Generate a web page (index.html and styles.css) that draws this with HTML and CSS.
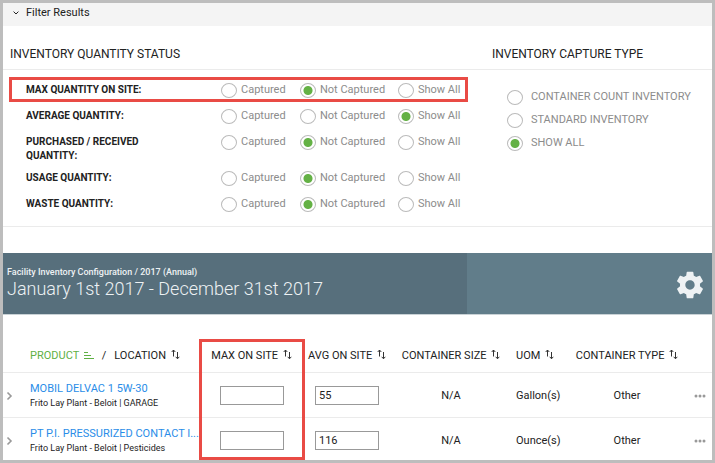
FILE: index.html
```html
<!DOCTYPE html>
<html lang="en">
<head>
<meta charset="utf-8">
<meta name="viewport" content="width=device-width, initial-scale=1">
<title>Facility Inventory Configuration</title>
<link rel="stylesheet" href="styles.css">
</head>
<body>
<svg class="sprite" aria-hidden="true">
  <symbol id="sort" viewBox="0 0 9 11">
    <path d="M2.500 7.500V1M.7 3 2.500 1l1.800 2M6.500 3v6.500M4.700 7.800 6.500 9.800l1.800-2" fill="none" stroke="currentColor"/>
  </symbol>
  <symbol id="chevron" viewBox="0 0 8 10">
    <path d="M1.500 1.500 5 5 1.500 8.500" fill="none" stroke="currentColor" stroke-width="1.600"/>
  </symbol>
  <symbol id="dots" viewBox="0 0 12 4">
    <circle cx="2" cy="2" r="1.500"/><circle cx="6" cy="2" r="1.500"/><circle cx="10" cy="2" r="1.500"/>
  </symbol>
</svg>
<main class="frame">
  <button type="button" class="filter-toggle">
    <svg width="6" height="4" viewBox="0 0 6 4" aria-hidden="true"><path d="M.6.6 3 3 5.400.6" fill="none" stroke="currentColor"/></svg>
    Filter Results
  </button>
  <form class="filters">
    <section class="quantity">
      <h2>INVENTORY QUANTITY STATUS</h2>
      <div class="rows">
        <div class="row marked" role="radiogroup" aria-labelledby="q1">
          <span class="name" id="q1">MAX QUANTITY ON SITE:</span>
          <label><input type="radio" name="max">Captured</label>
          <label><input type="radio" name="max" checked>Not Captured</label>
          <label><input type="radio" name="max">Show All</label>
        </div>
        <div class="row" role="radiogroup" aria-labelledby="q2">
          <span class="name" id="q2">AVERAGE QUANTITY:</span>
          <label><input type="radio" name="avg">Captured</label>
          <label><input type="radio" name="avg">Not Captured</label>
          <label><input type="radio" name="avg" checked>Show All</label>
        </div>
        <div class="row" role="radiogroup" aria-labelledby="q3">
          <span class="name" id="q3">PURCHASED / RECEIVED QUANTITY:</span>
          <label><input type="radio" name="purchased">Captured</label>
          <label><input type="radio" name="purchased" checked>Not Captured</label>
          <label><input type="radio" name="purchased">Show All</label>
        </div>
        <div class="row" role="radiogroup" aria-labelledby="q4">
          <span class="name" id="q4">USAGE QUANTITY:</span>
          <label><input type="radio" name="usage">Captured</label>
          <label><input type="radio" name="usage" checked>Not Captured</label>
          <label><input type="radio" name="usage">Show All</label>
        </div>
        <div class="row" role="radiogroup" aria-labelledby="q5">
          <span class="name" id="q5">WASTE QUANTITY:</span>
          <label><input type="radio" name="waste">Captured</label>
          <label><input type="radio" name="waste" checked>Not Captured</label>
          <label><input type="radio" name="waste">Show All</label>
        </div>
      </div>
    </section>
    <section class="capture">
      <h2>INVENTORY CAPTURE TYPE</h2>
      <div class="options">
        <label><input type="radio" name="type">CONTAINER COUNT INVENTORY</label>
        <label><input type="radio" name="type">STANDARD INVENTORY</label>
        <label><input type="radio" name="type" checked>SHOW ALL</label>
      </div>
    </section>
  </form>
  <header class="banner">
    <div class="period">
      <p>Facility Inventory Configuration / 2017 (Annual)</p>
      <h1>January 1st 2017 - December 31st 2017</h1>
    </div>
    <button type="button" class="settings" aria-label="Settings">
      <svg width="32" height="32" viewBox="0 0 24 24" aria-hidden="true"><path fill="currentColor" d="M19.430 12.980c.04-.32.07-.64.07-.98s-.03-.66-.07-.98l2.110-1.650c.19-.15.24-.42.12-.64l-2-3.460c-.12-.22-.39-.3-.61-.22l-2.490 1c-.52-.4-1.080-.73-1.690-.98l-.38-2.650C14.460 2.180 14.250 2 14 2h-4c-.25 0-.46.18-.49.42l-.38 2.650c-.61.25-1.170.59-1.690.98l-2.490-1c-.23-.09-.49 0-.61.22l-2 3.460c-.13.22-.07.49.12.64l2.110 1.650c-.04.32-.07.65-.07.98s.03.66.07.98l-2.110 1.650c-.19.15-.24.42-.12.64l2 3.460c.12.22.39.3.61.22l2.490-1c.52.4 1.080.73 1.690.98l.38 2.650c.03.24.24.42.49.42h4c.25 0 .46-.18.49-.42l.38-2.650c.61-.25 1.170-.59 1.690-.98l2.490 1c.23.09.49 0 .61-.22l2-3.460c.12-.22.07-.49-.12-.64l-2.110-1.650zM12 15.500c-1.930 0-3.500-1.570-3.500-3.500s1.570-3.500 3.500-3.500 3.500 1.570 3.500 3.500-1.570 3.500-3.500 3.500z"/></svg>
    </button>
  </header>
  <table class="inventory">
    <colgroup>
      <col class="c-open"><col><col class="c-max"><col class="c-avg"><col class="c-size"><col class="c-uom"><col class="c-type"><col class="c-more">
    </colgroup>
    <thead>
      <tr>
        <td></td>
        <th scope="col" class="product">
          <span class="heads">
            <span class="sorted">PRODUCT <svg width="10" height="8" viewBox="0 0 10 8" aria-hidden="true"><path d="M0 1.500h4M0 4.500h7M0 7.500h10" stroke="currentColor" stroke-width="1"/></svg></span>
            <span>/</span>
            <span>LOCATION <svg class="sort" aria-hidden="true"><use href="#sort"/></svg></span>
          </span>
        </th>
        <th scope="col" class="max">MAX ON SITE <svg class="sort" aria-hidden="true"><use href="#sort"/></svg></th>
        <th scope="col">AVG ON SITE <svg class="sort" aria-hidden="true"><use href="#sort"/></svg></th>
        <th scope="col">CONTAINER SIZE <svg class="sort" aria-hidden="true"><use href="#sort"/></svg></th>
        <th scope="col" class="uom">UOM <svg class="sort" aria-hidden="true"><use href="#sort"/></svg></th>
        <th scope="col">CONTAINER TYPE <svg class="sort" aria-hidden="true"><use href="#sort"/></svg></th>
        <td></td>
      </tr>
    </thead>
    <tbody>
      <tr>
        <td><button type="button" class="open" aria-label="Expand row"><svg width="8" height="10" aria-hidden="true"><use href="#chevron"/></svg></button></td>
        <td class="product"><a href="#">MOBIL DELVAC 1 5W-30</a><p>Frito Lay Plant - Beloit | GARAGE</p></td>
        <td><input type="text" aria-label="Max on site"></td>
        <td><input type="text" aria-label="Average on site" value="55"></td>
        <td>N/A</td>
        <td class="uom">Gallon(s)</td>
        <td>Other</td>
        <td><button type="button" class="more" aria-label="More actions"><svg width="12" height="4" aria-hidden="true"><use href="#dots"/></svg></button></td>
      </tr>
      <tr>
        <td><button type="button" class="open" aria-label="Expand row"><svg width="8" height="10" aria-hidden="true"><use href="#chevron"/></svg></button></td>
        <td class="product"><a href="#">PT P.I. PRESSURIZED CONTACT I...</a><p>Frito Lay Plant - Beloit | Pesticides</p></td>
        <td><input type="text" aria-label="Max on site"></td>
        <td><input type="text" aria-label="Average on site" value="116"></td>
        <td>N/A</td>
        <td class="uom">Ounce(s)</td>
        <td>Other</td>
        <td><button type="button" class="more" aria-label="More actions"><svg width="12" height="4" aria-hidden="true"><use href="#dots"/></svg></button></td>
      </tr>
    </tbody>
  </table>
</main>
</body>
</html>
```
FILE: styles.css
```css
*,
*::after {
  box-sizing: border-box;
}

body,
h1,
h2,
p {
  margin: 0;
}

body {
  font: 11px/14px Roboto, sans-serif;
  color: #222;
  background: #fff;
}

button {
  padding: 0;
  border: 0;
  background: none;
  font: inherit;
  color: inherit;
}

svg {
  display: block;
}

.sprite {
  display: none;
}

.frame {
  min-height: 100vh;
  border: 3px solid #bdbdbd;
}

.filter-toggle {
  display: flex;
  align-items: center;
  gap: 7px;
  width: 100%;
  height: 23px;
  padding: 0 10px 3px;
  background: #f4f4f4;
}

.filters {
  display: flex;
  border-bottom: 1px solid #ebebeb;
}

.quantity {
  flex: 66;
}

.capture {
  flex: 34;
}

h2 {
  height: 44px;
  padding: 20px 7px 0;
  border-bottom: 1px solid #ebebeb;
  font-size: 12px;
  line-height: 16px;
  font-weight: 400;
}

.capture h2 {
  padding-left: 21px;
}

.rows {
  padding: 6px 0 10px;
}

.row {
  position: relative;
  display: grid;
  grid-template-columns: 195px 79px 98px 1fr;
  align-items: start;
  min-height: 26px;
  padding: 7px 0 1px 23px;
}

.marked::after {
  content: "";
  position: absolute;
  inset: 1px 3px 0 6px;
  border: 3px solid #e94b45;
}

.name {
  max-width: 130px;
  font-size: 10px;
  font-weight: 700;
}

label {
  display: flex;
  align-items: center;
  gap: 4px;
  height: 14px;
  color: #8c8c8c;
  white-space: nowrap;
}

input[type="radio"] {
  appearance: none;
  flex: none;
  width: 16px;
  height: 15px;
  margin: 0;
  border: 1px solid #bbb;
  border-radius: 50%;
}

input[type="radio"]:checked {
  background: radial-gradient(circle, #64b145 4px, transparent 5px);
}

.options {
  display: grid;
  gap: 9px;
  padding: 20px 0 0 36px;
}

.options label {
  gap: 8px;
}

.banner {
  display: flex;
  justify-content: space-between;
  align-items: stretch;
  height: 62px;
  margin-top: 26px;
  border-bottom: 1px solid #c9d2d6;
  background: #617d8a;
  color: #eef2f4;
}

.period {
  flex: 465;
  padding: 12px 4px 0;
  background: #576f7c;
}

.period p {
  font-size: 9px;
  font-weight: 500;
}

h1 {
  font-size: 18px;
  line-height: 20px;
  font-weight: 300;
}

.settings {
  display: flex;
  flex: 244;
  align-items: center;
  justify-content: flex-end;
  padding: 2px 6px 0 0;
}

.inventory {
  width: 100%;
  margin-top: 24px;
  table-layout: fixed;
  border-collapse: separate;
  border-spacing: 0;
  text-align: center;
}

.c-open { width: 27px; }
.c-max { width: 97px; }
.c-avg { width: 94px; }
.c-size { width: 114px; }
.c-uom { width: 60px; }
.c-type { width: 118px; }
.c-more { width: 26px; }

.inventory th,
.inventory td {
  padding: 0;
  white-space: nowrap;
}

.inventory th {
  height: 34px;
  font-weight: 400;
}

.inventory thead th,
.inventory thead td,
.inventory tbody tr:not(:last-child) td {
  border-bottom: 1px solid #ebebeb;
}

.inventory tbody td {
  height: 45px;
  padding-top: 1px;
}

.inventory tbody tr:last-child td {
  height: 42px;
  padding-top: 3px;
}

.inventory th svg {
  display: inline-block;
  margin-left: 2px;
}

.inventory .sort {
  width: 9px;
  height: 11px;
  color: #333;
  vertical-align: -1px;
}

.inventory .max {
  position: relative;
}

.inventory .max::after {
  content: "";
  position: absolute;
  top: 0;
  left: -4px;
  right: -5px;
  height: 121px;
  border: 3px solid #e94b45;
}

.inventory .product,
.inventory .uom {
  text-align: left;
}

.inventory .uom {
  padding-left: 8px;
}

.heads {
  display: flex;
  gap: 8px;
}

.sorted {
  color: #5fb044;
}

.product a {
  display: block;
  color: #2a8de8;
  text-decoration: none;
}

.product p {
  font-size: 9px;
}

input[type="text"] {
  display: block;
  width: 64px;
  height: 19px;
  margin: 0 auto;
  padding: 0 3px;
  border: 1px solid #999;
  font: inherit;
  color: inherit;
}

.open {
  display: block;
  margin-left: 3px;
  color: #999;
}

.more {
  display: block;
  margin-left: 8px;
  fill: #999;
}
```
